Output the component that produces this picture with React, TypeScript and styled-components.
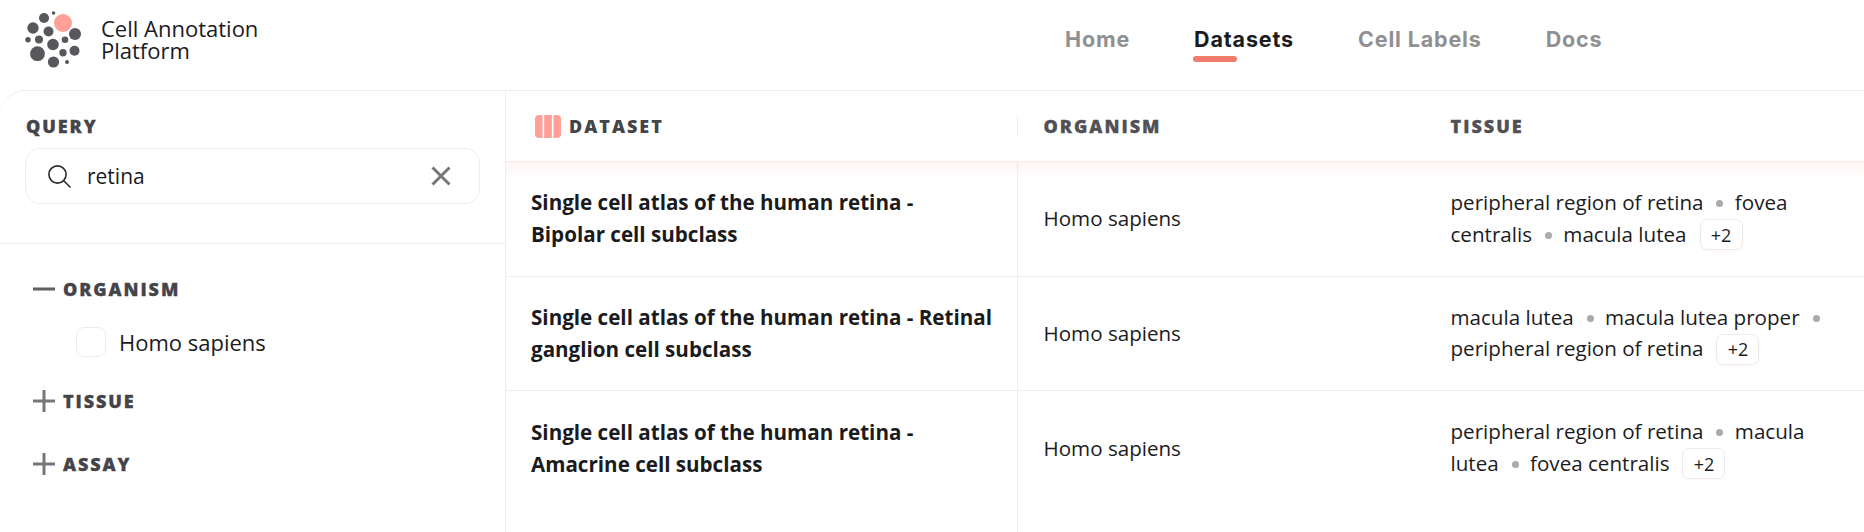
import React from "react";
import styled, { createGlobalStyle } from "styled-components";

const Global = createGlobalStyle`
  html, body { margin: 0; padding: 0; background: #fff; }
  body { font-family: "Open Sans", "Liberation Sans", sans-serif; color: #1b1b1e; width: 1864px; height: 532px; overflow: hidden; }
`;

const Page = styled.div`
  display: flex;
  flex-direction: column;
  width: 1864px;
  height: 532px;
  overflow: hidden;
`;

const TopBar = styled.header`
  display: flex;
  align-items: center;
  height: 90px;
  box-sizing: border-box;
  padding-bottom: 12px;
  flex: none;
`;

const Brand = styled.div`
  display: flex;
  align-items: center;
  width: 1065px;
  padding-left: 20px;
  box-sizing: border-box;
  gap: 17px;
`;

const BrandName = styled.div`
  font-size: 22px;
  line-height: 22px;
  color: #1b1b1e;
`;

const Nav = styled.nav`
  display: flex;
  gap: 64px;
`;

const NavLink = styled.a<{ $active?: boolean }>`
  position: relative;
  font-family: "Inter", "Liberation Sans", sans-serif;
  font-size: 21.5px;
  font-weight: 700;
  line-height: 26px;
  letter-spacing: 0.85px;
  color: ${(p) => (p.$active ? "#1b1b1e" : "#909093")};
  ${(p) =>
    p.$active &&
    `&::after {
      content: "";
      position: absolute;
      left: -1px;
      top: 30px;
      width: 44px;
      height: 6px;
      border-radius: 3px;
      background: #f47c6e;
    }`}
`;

const Body = styled.main`
  flex: 1;
  display: grid;
  grid-template-columns: 506px 1fr;
  border-top: 1px solid #eeeeef;
  border-top-left-radius: 26px;
  overflow: hidden;
  position: relative;
`;

const Sidebar = styled.aside`
  display: flex;
  flex-direction: column;
  border-right: 1px solid #eeeeef;
  border-left: 1px solid #f3f3f4;
  border-top-left-radius: 26px;
  margin-left: -1px;
`;

const QuerySection = styled.section`
  padding: 24px 25px 39px 26px;
  border-bottom: 1px solid #eeeeef;
  display: flex;
  flex-direction: column;
  gap: 11px;
`;

const SectionLabel = styled.div`
  font-size: 18px;
  font-weight: 800;
  line-height: 22px;
  letter-spacing: 1.9px;
  color: #444449;
  -webkit-text-stroke: 0.3px currentColor;
`;

const SearchBox = styled.div`
  display: flex;
  align-items: center;
  height: 56px;
  margin-left: -1px;
  box-sizing: border-box;
  border: 1px solid #ececee;
  border-radius: 15px;
  padding: 0 28px 0 21px;
  gap: 16px;
`;

const SearchValue = styled.span`
  flex: 1;
  font-size: 21px;
  line-height: 30px;
  color: #1b1b1e;
`;

const Filters = styled.div`
  display: flex;
  flex-direction: column;
  padding: 33px 0 0 33px;
`;

const FilterHead = styled.div<{ $gapAfter: number }>`
  display: flex;
  align-items: center;
  gap: 8px;
  height: 24px;
  margin-bottom: ${(p) => p.$gapAfter}px;
`;

const FilterOption = styled.label`
  display: flex;
  align-items: center;
  gap: 13px;
  margin: 0 0 32px 43px;
  font-size: 22px;
  line-height: 30px;
  color: #1b1b1e;
`;

const Checkbox = styled.span`
  width: 30px;
  height: 30px;
  box-sizing: border-box;
  border: 1px solid #ececee;
  border-radius: 8px;
`;

const Table = styled.div`
  display: grid;
  grid-template-columns: 512px 407px 1fr;
  grid-auto-rows: min-content;
  align-content: start;
`;

const HeadCell = styled.div<{ $divided?: boolean }>`
  position: relative;
  display: flex;
  align-items: center;
  gap: 8px;
  height: 70px;
  padding: 0 25.5px;
  border-bottom: 1px solid #f0eeee;
  font-size: 18px;
  font-weight: 800;
  letter-spacing: 2px;
  color: #505055;
  -webkit-text-stroke: 0.3px currentColor;
  ${(p) =>
    p.$divided &&
    `&::before {
      content: "";
      position: absolute;
      left: -1px;
      top: 25px;
      height: 20px;
      width: 1px;
      background: #eeeeef;
    }`}
`;

const FirstHeadCell = styled(HeadCell)`
  padding-left: 29px;
  color: #444449;
  -webkit-text-stroke: 0;
`;

const Shade = styled.div`
  position: absolute;
  left: 506px;
  right: 0;
  top: 71px;
  height: 18px;
  pointer-events: none;
  background: linear-gradient(to bottom, rgba(244, 124, 110, 0.07), rgba(244, 124, 110, 0));
`;

const Cell = styled.div<{ $last?: boolean }>`
  display: flex;
  align-items: center;
  box-sizing: border-box;
  height: ${(p) => (p.$last ? 142 : 114.5)}px;
  padding: 0 25.5px;
  border-bottom: ${(p) => (p.$last ? "none" : "1px solid #eeeeef")};
  font-size: 20.6px;
  line-height: 32px;
  color: #1b1b1e;
`;

const TitleCell = styled(Cell)`
  font-weight: 700;
  padding-left: 25px;
  padding-right: 24.8px;
  padding-bottom: ${(p) => (p.$last ? 29 : 1)}px;
  border-right: 1px solid #eeeeef;
`;

const OrganismCell = styled(Cell)`
  padding-bottom: ${(p) => (p.$last ? 29 : 1)}px;
`;

const TissueCell = styled(Cell)`
  display: block;
  padding-top: 25px;
  line-height: 31.5px;
`;

const KeepWithDot = styled.span`
  white-space: nowrap;
`;

const Dot = styled.span`
  display: inline-block;
  width: 7px;
  height: 7px;
  margin: 0 6px 1px 13px;
  border-radius: 50%;
  background: #a9a9ae;
  vertical-align: middle;
`;

const MoreChip = styled.span`
  display: inline-flex;
  align-items: center;
  justify-content: center;
  box-sizing: border-box;
  width: 43px;
  height: 31px;
  margin: -5px 0 -3px 13px;
  border: 1px solid #eeeaea;
  border-radius: 7px;
  font-size: 18px;
  line-height: 20px;
  vertical-align: middle;
  box-shadow: 0 1px 2px rgba(244, 124, 110, 0.08);
`;

const dots: [number, number, number, string?][] = [
  [53, 23, 9, "#ff9f97"],
  [34, 18, 5],
  [43.5, 13, 1.8],
  [23, 28, 5.7],
  [38.5, 31.5, 5],
  [65, 34, 6],
  [18, 39.7, 2.7],
  [29, 39.5, 4],
  [43, 44.5, 5.8],
  [55, 39.7, 3.3],
  [27.5, 53.7, 7.4],
  [53, 52.7, 3.7],
  [64.5, 50.7, 5],
  [43.5, 62, 5.6],
  [57, 62, 2],
];

const Logo = () => (
  <svg width="64" height="70" viewBox="10 4 64 70" aria-hidden="true">
    {dots.map(([cx, cy, r, fill], i) => (
      <circle key={i} cx={cx} cy={cy} r={r} fill={fill ?? "#57575c"} />
    ))}
  </svg>
);

const SearchIcon = () => (
  <svg width="24" height="24" viewBox="0 0 24 24" fill="none" stroke="#2a2a2e" strokeWidth="1.6" strokeLinecap="round">
    <circle cx="10.5" cy="10.5" r="8.6" />
    <path d="M17 17l6 6" />
  </svg>
);

const ClearIcon = () => (
  <svg width="20" height="20" viewBox="0 0 20 20" fill="none" stroke="#77777b" strokeWidth="3">
    <path d="M1.5 1.5l17 17M18.5 1.5l-17 17" />
  </svg>
);

const Toggle = ({ open }: { open?: boolean }) => (
  <svg width="22" height="22" viewBox="0 0 22 22" fill="none" stroke={open ? "#5e5e63" : "#77777b"} strokeWidth="3">
    <path d="M0 11h22" />
    {!open && <path d="M11 0v22" />}
  </svg>
);

const ColumnsIcon = () => (
  <svg width="26" height="23" viewBox="0 0 26 23" fill="#ff9f97">
    <path d="M4 0h3.5v23H4a4 4 0 0 1-4-4V4a4 4 0 0 1 4-4z" />
    <rect x="9.2" y="0" width="7.6" height="23" />
    <path d="M18.5 0H22a4 4 0 0 1 4 4v15a4 4 0 0 1-4 4h-3.5z" />
  </svg>
);

const rows = [
  {
    title: "Single cell atlas of the human retina - Bipolar cell subclass",
    tissues: ["peripheral region of retina", "fovea centralis", "macula lutea"],
  },
  {
    title: "Single cell atlas of the human retina - Retinal ganglion cell subclass",
    tissues: ["macula lutea", "macula lutea proper", "peripheral region of retina"],
  },
  {
    title: "Single cell atlas of the human retina - Amacrine cell subclass",
    tissues: ["peripheral region of retina", "macula lutea", "fovea centralis"],
  },
];

const Tissue = ({ name, dotted }: { name: string; dotted: boolean }) => {
  if (!dotted) return <>{name}</>;
  const cut = name.lastIndexOf(" ");
  return (
    <>
      {name.slice(0, cut + 1)}
      <KeepWithDot>
        {name.slice(cut + 1)}
        <Dot />
      </KeepWithDot>{" "}
    </>
  );
};

export default function App() {
  return (
    <Page>
      <Global />
      <TopBar>
        <Brand>
          <Logo />
          <BrandName>
            Cell Annotation
            <br />
            Platform
          </BrandName>
        </Brand>
        <Nav>
          <NavLink>Home</NavLink>
          <NavLink $active>Datasets</NavLink>
          <NavLink>Cell Labels</NavLink>
          <NavLink>Docs</NavLink>
        </Nav>
      </TopBar>
      <Body>
        <Sidebar>
          <QuerySection>
            <SectionLabel>QUERY</SectionLabel>
            <SearchBox>
              <SearchIcon />
              <SearchValue>retina</SearchValue>
              <ClearIcon />
            </SearchBox>
          </QuerySection>
          <Filters>
            <FilterHead $gapAfter={26}>
              <Toggle open />
              <SectionLabel>ORGANISM</SectionLabel>
            </FilterHead>
            <FilterOption>
              <Checkbox />
              Homo sapiens
            </FilterOption>
            <FilterHead $gapAfter={39}>
              <Toggle />
              <SectionLabel>TISSUE</SectionLabel>
            </FilterHead>
            <FilterHead $gapAfter={0}>
              <Toggle />
              <SectionLabel>ASSAY</SectionLabel>
            </FilterHead>
          </Filters>
        </Sidebar>
        <Table>
          <FirstHeadCell>
            <ColumnsIcon />
            DATASET
          </FirstHeadCell>
          <HeadCell $divided>ORGANISM</HeadCell>
          <HeadCell>TISSUE</HeadCell>
          {rows.map((row, i) => {
            const last = i === rows.length - 1;
            return (
              <React.Fragment key={row.title}>
                <TitleCell $last={last}>
                  <span>{row.title}</span>
                </TitleCell>
                <OrganismCell $last={last}>Homo sapiens</OrganismCell>
                <TissueCell $last={last}>
                  {row.tissues.map((t, j) => (
                    <Tissue key={t} name={t} dotted={j < row.tissues.length - 1} />
                  ))}
                  <MoreChip>+2</MoreChip>
                </TissueCell>
              </React.Fragment>
            );
          })}
        </Table>
        <Shade />
      </Body>
    </Page>
  );
}
